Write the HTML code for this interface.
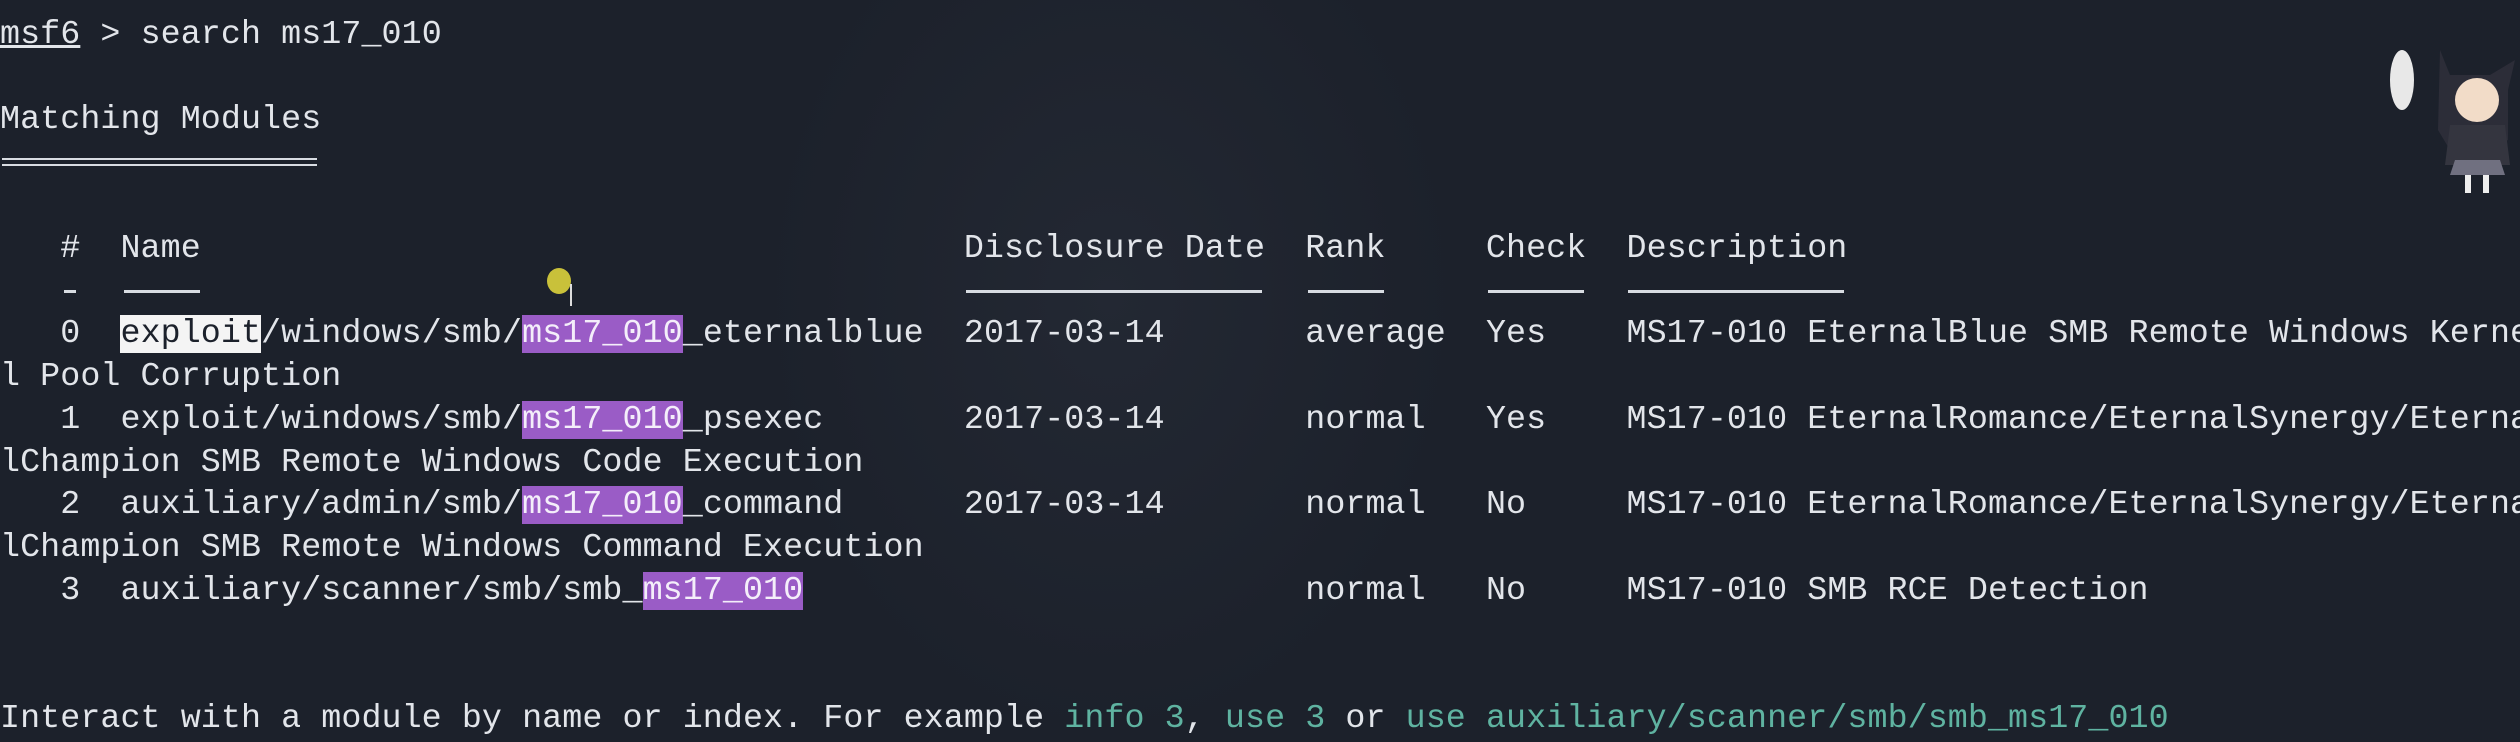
<!DOCTYPE html>
<html><head><meta charset="utf-8"><style>
html,body{margin:0;padding:0;}
body{width:2520px;height:742px;background:#1c212b;overflow:hidden;position:relative;font-family:"Liberation Mono",monospace;font-size:33.33px;color:#e2e5ea;}
.l{position:absolute;left:0;height:42.8px;line-height:42.8px;white-space:pre;letter-spacing:0.08px;margin-top:3px;}
.p{background:#9a5cc6;color:#f4eefa;}
.w{background:#f4f4f4;color:#1c212b;}
.t{color:#5fb3a1;}
.u{position:absolute;height:3px;background:#d8dce2;}
</style></head><body>
<div style="position:absolute;left:760px;top:0;width:700px;height:742px;background:radial-gradient(ellipse at 50% 40%,#232833 0%,#1c212b 70%);"></div>
<div class="l" style="top:10.6px"><span style="text-decoration:underline">msf6</span> &gt; search ms17_010</div>
<div class="l" style="top:96.2px">Matching Modules</div>
<div class="u" style="left:2px;top:158px;width:315px;height:2px"></div>
<div class="u" style="left:2px;top:164px;width:315px;height:2px"></div>
<div class="l" style="top:224.6px">   #  Name                                      Disclosure Date  Rank     Check  Description</div>
<div class="u" style="left:64px;top:290px;width:12px"></div>
<div class="u" style="left:124px;top:290px;width:76px"></div>
<div class="u" style="left:966px;top:290px;width:296px"></div>
<div class="u" style="left:1308px;top:290px;width:76px"></div>
<div class="u" style="left:1488px;top:290px;width:96px"></div>
<div class="u" style="left:1628px;top:290px;width:216px"></div>
<div class="l" style="top:310.2px">   0  <span class="w">exploit</span>/windows/smb/<span class="p">ms17_010</span>_eternalblue  2017-03-14       average  Yes    MS17-010 EternalBlue SMB Remote Windows Kerne</div>
<div class="l" style="top:353px">l Pool Corruption</div>
<div class="l" style="top:395.8px">   1  exploit/windows/smb/<span class="p">ms17_010</span>_psexec       2017-03-14       normal   Yes    MS17-010 EternalRomance/EternalSynergy/Eterna</div>
<div class="l" style="top:438.6px">lChampion SMB Remote Windows Code Execution</div>
<div class="l" style="top:481.4px">   2  auxiliary/admin/smb/<span class="p">ms17_010</span>_command      2017-03-14       normal   No     MS17-010 EternalRomance/EternalSynergy/Eterna</div>
<div class="l" style="top:524.2px">lChampion SMB Remote Windows Command Execution</div>
<div class="l" style="top:567px">   3  auxiliary/scanner/smb/smb_<span class="p">ms17_010</span>                         normal   No     MS17-010 SMB RCE Detection</div>
<div class="l" style="top:695.4px">Interact with a module by name or index. For example <span class="t">info 3</span>, <span class="t">use 3</span> or <span class="t">use auxiliary/scanner/smb/smb_ms17_010</span></div>
<div style="position:absolute;left:547px;top:268px;width:24px;height:26px;border-radius:50%;background:#c9c13a;"></div>
<div style="position:absolute;left:570px;top:284px;width:2px;height:22px;background:#ddd;"></div>
<svg style="position:absolute;left:2380px;top:30px" width="140" height="170" viewBox="0 0 140 170">
<ellipse cx="22" cy="50" rx="12" ry="30" fill="#e8e8e8"/>
<path d="M60 20 L70 45 L110 45 L135 30 L128 60 L128 110 L110 120 L70 120 L58 100 Z" fill="#2c2d38"/>
<ellipse cx="97" cy="70" rx="22" ry="22" fill="#f2dcc8"/>
<path d="M70 95 L125 95 L130 135 L65 135 Z" fill="#34353f"/>
<path d="M75 130 L120 130 L125 145 L70 145 Z" fill="#707080"/>
<rect x="85" y="145" width="6" height="18" fill="#eee"/><rect x="103" y="145" width="6" height="18" fill="#eee"/>
</svg>
</body></html>
